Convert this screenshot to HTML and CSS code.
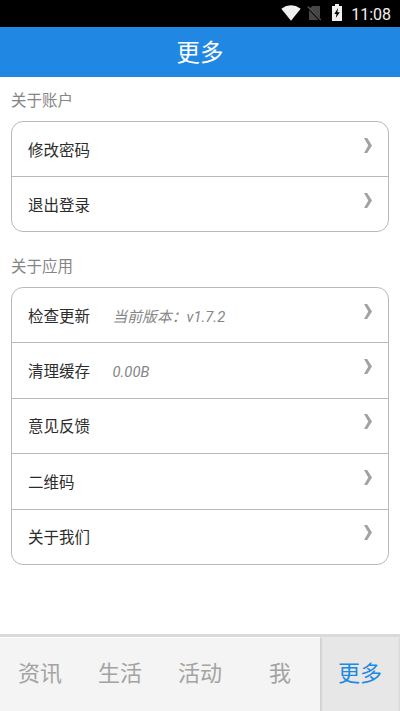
FILE: index.html
```html
<!DOCTYPE html>
<html lang="zh-CN">
<head>
<meta charset="utf-8">
<title>更多</title>
<link rel="stylesheet" href="styles.css">
</head>
<body>
<svg class="defs" width="0" height="0"><symbol id="chevron" viewBox="0 0 8 15"><path d="M0 0H3.2L8 7.5L3.2 15H0L4.3 7.5Z" fill="currentColor"/></symbol></svg>
<div class="screen">
  <div class="status">
    <svg class="wifi" viewBox="0 0 20 16"><path d="M0.3 3.7Q10-3.2 19.7 3.7L10 15.7Z" fill="#f0f0f0"/></svg>
    <svg class="sim" viewBox="0 0 15 16"><path d="M5.5 1H13V13L2.5 3.5ZM2 5L11.5 15H2Z" fill="#464646"/><path d="M.7 1.5L13.8 15" stroke="#555" stroke-width="1.2"/></svg>
    <svg class="battery" viewBox="0 0 10 17"><path d="M0 2H3V0H7V2H10V17H0Z" fill="#f0f0f0"/><path d="M6 4L2.3 10H4.5L3.8 14L7.8 8.3H5.4Z" fill="#000"/></svg>
    <span class="time">11:08</span>
  </div>
  <header class="header">更多</header>
  <main class="content">
    <h2 class="title">关于账户</h2>
    <div class="card">
      <div class="row"><span class="label">修改密码</span><svg class="chev"><use href="#chevron"/></svg></div>
      <div class="row"><span class="label">退出登录</span><svg class="chev"><use href="#chevron"/></svg></div>
    </div>
    <h2 class="title">关于应用</h2>
    <div class="card">
      <div class="row"><span class="label">检查更新</span><span class="note">当前版本：v1.7.2</span><svg class="chev"><use href="#chevron"/></svg></div>
      <div class="row"><span class="label">清理缓存</span><span class="note">0.00B</span><svg class="chev"><use href="#chevron"/></svg></div>
      <div class="row"><span class="label">意见反馈</span><svg class="chev"><use href="#chevron"/></svg></div>
      <div class="row"><span class="label">二维码</span><svg class="chev"><use href="#chevron"/></svg></div>
      <div class="row"><span class="label">关于我们</span><svg class="chev"><use href="#chevron"/></svg></div>
    </div>
  </main>
  <nav class="tabs">
    <span class="tab">资讯</span>
    <span class="tab">生活</span>
    <span class="tab">活动</span>
    <span class="tab">我</span>
    <span class="tab active">更多</span>
  </nav>
</div>
</body>
</html>
```
FILE: styles.css
```css
* { box-sizing: border-box; }
body {
  margin: 0;
  background: #fff;
  font-family: Roboto, "Noto Sans CJK SC", sans-serif;
}
.defs { display: block; }
.screen {
  display: flex;
  flex-direction: column;
  height: 711px;
  overflow: hidden;
}
.status {
  display: flex;
  align-items: flex-start;
  justify-content: flex-end;
  height: 27px;
  padding: 5px 9px 0 0;
  background: #000;
  flex: none;
}
.wifi { width: 20px; height: 16px; margin-right: 6px; }
.sim { width: 15px; height: 16px; margin-right: 10px; }
.battery { width: 10px; height: 17px; margin: -1px 9px 0 0; }
.time {
  color: #f0f0f0;
  font-size: 16px;
  font-weight: 400;
  line-height: 20px;
}
.header {
  height: 50px;
  flex: none;
  background: #2088e2;
  color: #fff;
  font-size: 23.4px;
  line-height: 52px;
  text-align: center;
}
.content { flex: 1; padding: 0 11px; }
.title {
  margin: 0;
  height: 44px;
  padding-top: 13px;
  color: #858585;
  font-size: 15.5px;
  font-weight: 400;
  line-height: 22px;
}
.card + .title { height: 55px; padding-top: 24px; }
.card {
  border: 1px solid #b9b9b9;
  border-radius: 12px;
  width: 378px;
}
.row {
  display: flex;
  align-items: center;
  height: 55.5px;
  padding: 3px 16px 0;
  font-size: 15.5px;
  line-height: 22px;
}
.row + .row { border-top: 1px solid #b9b9b9; }
.row:first-child { height: 54px; }
.row:last-child { height: 55px; }
.label { width: 84.5px; color: #2c2c2c; }
.note { color: #858585; font-size: 14.8px; font-style: italic; }
.chev {
  width: 8px;
  height: 15px;
  margin: -11px 0 0 auto;
  color: #a2a2a2;
}
.tabs {
  display: flex;
  flex: none;
  height: 77px;
  border-top: 3px solid #dadada;
  background: #f4f4f4;
}
.tab {
  flex: 1;
  border-top: 1px solid #fff;
  color: #a3a3a3;
  font-size: 22px;
  line-height: 72px;
  text-align: center;
}
.active {
  border-top-color: #e7e7e7;
  background: linear-gradient(90deg, #cccccc, #e7e7e7 3px, #e7e7e7 78px, #d5d5d5);
  color: #2088e2;
}
```
